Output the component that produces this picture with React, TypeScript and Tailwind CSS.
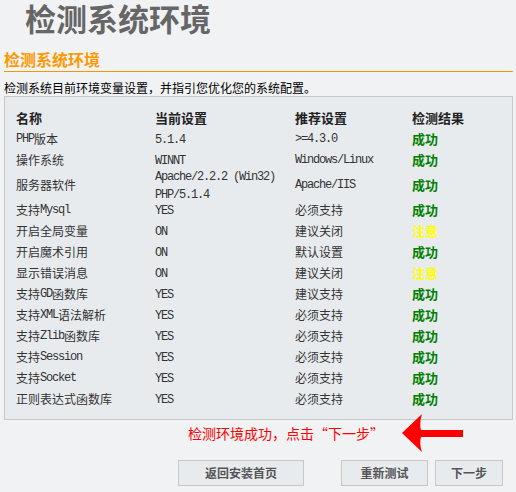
import React from "react";

type Status = "ok" | "warn";

const ROWS: { name: string; current: string[]; need: string; status: Status }[] = [
  { name: "PHP版本", current: ["5.1.4"], need: ">=4.3.0", status: "ok" },
  { name: "操作系统", current: ["WINNT"], need: "Windows/Linux", status: "ok" },
  { name: "服务器软件", current: ["Apache/2.2.2 (Win32)", "PHP/5.1.4"], need: "Apache/IIS", status: "ok" },
  { name: "支持Mysql", current: ["YES"], need: "必须支持", status: "ok" },
  { name: "开启全局变量", current: ["ON"], need: "建议关闭", status: "warn" },
  { name: "开启魔术引用", current: ["ON"], need: "默认设置", status: "ok" },
  { name: "显示错误消息", current: ["ON"], need: "建议关闭", status: "warn" },
  { name: "支持GD函数库", current: ["YES"], need: "建议支持", status: "ok" },
  { name: "支持XML语法解析", current: ["YES"], need: "必须支持", status: "ok" },
  { name: "支持Zlib函数库", current: ["YES"], need: "必须支持", status: "ok" },
  { name: "支持Session", current: ["YES"], need: "必须支持", status: "ok" },
  { name: "支持Socket", current: ["YES"], need: "必须支持", status: "ok" },
  { name: "正则表达式函数库", current: ["YES"], need: "必须支持", status: "ok" },
];

// latin runs get a narrow monospace, CJK stays full width
function Mixed({ text }: { text: string }) {
  const parts = text.split(/([\x20-\x7e]+)/).filter(Boolean);
  return (
    <>
      {parts.map((p, i) =>
        /^[\x20-\x7e]+$/.test(p) ? (
          <span key={i} className="font-['Liberation_Mono'] tracking-[-1.2px] whitespace-pre">
            {p}
          </span>
        ) : (
          <span key={i}>{p}</span>
        )
      )}
    </>
  );
}

function Result({ status }: { status: Status }) {
  return status === "ok" ? (
    <span className="font-bold text-[13px] text-[#008000]">成功</span>
  ) : (
    <span className="font-bold text-[13px] text-[#ffff00]">注意</span>
  );
}

function Arrow() {
  return (
    <svg width="62" height="40" viewBox="0 0 62 40" className="ml-[18px] shrink-0">
      <path
        d="M0 20 L20 1 Q17 11 19 17 L61 17 L61 24 L19 24 Q17 30 20 39 Z"
        fill="#ff0000"
      />
    </svg>
  );
}

function Button({ label, className }: { label: string; className: string }) {
  return (
    <button
      className={`h-[26px] bg-[#e8ebee] border border-[#c8c8c8] text-[12px] font-bold text-[#555] ${className}`}
    >
      {label}
    </button>
  );
}

export default function App() {
  return (
    <div className="w-[516px] h-[492px] overflow-hidden bg-[#f1f2f4] font-['Noto_Sans_CJK_SC',sans-serif] text-[#333]">
      <h1 className="pl-[25px] pt-[1px] h-[34px] text-[31px] leading-[33px] font-bold text-[#666]">
        检测系统环境
      </h1>

      <h2 className="mt-[15px] ml-[4px] mr-[3px] pb-[2px] border-b border-[#f39800] text-[16px] leading-[20px] font-bold text-[#ff9900]">
        检测系统环境
      </h2>

      <p className="mt-[8px] pl-[4px] text-[12px] leading-[16px] text-black">
        检测系统目前环境变量设置，并指引您优化您的系统配置。
      </p>

      <div className="ml-[4px] mr-[3px] border border-[#c8c8c8] bg-[#e8ebee] pt-[10px] pb-[10px] pl-[11px]">
        <div className="grid grid-cols-[139px_140px_117px_1fr] text-[12px]">
          <div className="h-[21px] flex items-center font-bold text-[13px] text-[#222]">名称</div>
          <div className="h-[21px] flex items-center font-bold text-[13px] text-[#222]">当前设置</div>
          <div className="h-[21px] flex items-center font-bold text-[13px] text-[#222]">推荐设置</div>
          <div className="h-[21px] flex items-center font-bold text-[13px] text-[#222]">检测结果</div>

          {ROWS.map((r) => (
            <React.Fragment key={r.name}>
              <div className={`flex items-center ${r.current.length > 1 ? "h-[29px]" : "h-[21px]"}`}>
                <Mixed text={r.name} />
              </div>
              <div className={`flex flex-col justify-center leading-[16px] ${r.current.length > 1 ? "h-[29px]" : "h-[21px]"}`}>
                {r.current.map((c) => (
                  <div key={c}>
                    <Mixed text={c} />
                  </div>
                ))}
              </div>
              <div className={`flex items-center ${r.current.length > 1 ? "h-[29px]" : "h-[21px]"}`}>
                <Mixed text={r.need} />
              </div>
              <div className={`flex items-center ${r.current.length > 1 ? "h-[29px]" : "h-[21px]"}`}>
                <Result status={r.status} />
              </div>
            </React.Fragment>
          ))}
        </div>
      </div>

      <div className="mt-[3px] h-[20px] flex items-center pl-[188px]">
        <span className="text-[14px] leading-[20px] text-[#ff0000]">检测环境成功，点击“下一步”</span>
        <Arrow />
      </div>

      <div className="mt-[17px] flex pl-[178px]">
        <Button label="返回安装首页" className="w-[126px]" />
        <Button label="重新测试" className="ml-[37px] w-[87px]" />
        <Button label="下一步" className="ml-[7px] w-[68px]" />
      </div>
    </div>
  );
}
